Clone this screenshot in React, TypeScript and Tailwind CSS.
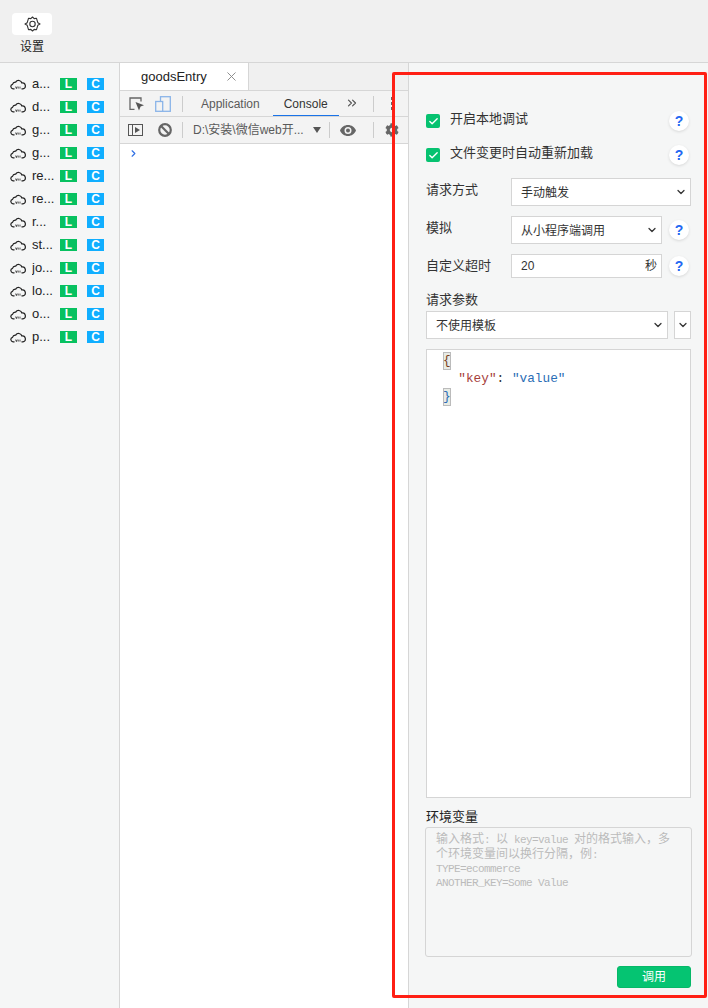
import { ChevronDown, ChevronRight, ChevronsRight, Check, X } from 'lucide-react'
import { FaCog } from 'react-icons/fa'

const FONT = "font-['Liberation_Sans','Noto_Sans_CJK_SC',sans-serif]"

const functions = ['a...', 'd...', 'g...', 'g...', 're...', 're...', 'r...', 'st...', 'jo...', 'lo...', 'o...', 'p...']

function CloudIcon() {
  return (
    <svg width="16" height="12" viewBox="0 0 16 12" fill="none" stroke="#222" strokeWidth="1.2" className="shrink-0">
      <path d="M4.5 10.8H3a2.3 2.3 0 0 1-.5-4.5 3 3 0 0 1 3.2-2.2A3.4 3.4 0 0 1 11.9 5a2.9 2.9 0 0 1 1 5.8h-1.4" />
      <path d="M5.6 8.6l.8 2 .7-2M8.2 8.6v2M10 8.6v2" strokeWidth="0.8" />
    </svg>
  )
}

function GearIcon() {
  return (
    <svg width="17" height="16" viewBox="0 0 17 16" fill="none" stroke="#333" strokeWidth="1.1" strokeLinejoin="round">
      <path d="M1 8l2.2-1.300L4.500 2.300l2.300.3L8.500 1l1.700 1.600 2.300-.3 1.300 4.400L16 8l-2.200 1.300-1.300 4.400-2.300-.3L8.500 15l-1.700-1.600-2.300.3-1.300-4.400z" />
      <circle cx="8.500" cy="8" r="2.700" />
    </svg>
  )
}

function Help() {
  return (
    <div className="flex h-5 w-5 items-center justify-center rounded-full bg-white text-[14px] font-bold text-[#2468f2] shadow-[0_1px_3px_rgba(0,0,0,0.12)]">
      ?
    </div>
  )
}

function CheckRow({ label }: { label: string }) {
  return (
    <div className="flex h-5 items-center pr-[2px]">
      <div className="flex h-[14px] w-[14px] items-center justify-center rounded-[2px] bg-[#06c270]">
        <Check size={11} strokeWidth={3} className="text-white" />
      </div>
      <span className="ml-[10px] flex-1 -translate-y-[2px] text-[13px] text-[#333]">{label}</span>
      <Help />
    </div>
  )
}

function Select({ label, className }: { label: string; className: string }) {
  return (
    <div className={`flex h-[28px] items-center border border-[#d5d5d5] bg-white text-[12px] text-[#333] ${className}`}>
      <span className="flex-1 pl-[9px] pt-[1px]">{label}</span>
      <ChevronDown size={12} strokeWidth={2.5} className="mr-[3px] text-[#333]" />
    </div>
  )
}

function Latin({ children }: { children: string }) {
  return <span className="whitespace-pre text-[11px] tracking-[-0.6px]">{children}</span>
}

export default function App() {
  return (
    <div className={`${FONT} relative flex h-[1008px] w-[708px] flex-col overflow-hidden bg-white`}>
      {/* top bar */}
      <div className="flex h-[63px] shrink-0 flex-col border-b border-[#d6d6d6] bg-[#f0f0f0] pl-[12px] pt-[13px]">
        <div className="flex h-[22px] w-[40px] items-center justify-center rounded-[4px] bg-white">
          <GearIcon />
        </div>
        <div className="mt-[3px] w-[40px] text-center text-[12px] text-[#222]">设置</div>
      </div>

      <div className="flex min-h-0 flex-1">
        {/* function list */}
        <div className="flex w-[120px] shrink-0 flex-col border-r border-[#d6d6d6] bg-[#f5f6f6] pt-[9px]">
          {functions.map((name, i) => (
            <div key={i} className="flex h-[23px] items-center pl-[10px]">
              <CloudIcon />
              <span className="ml-[6px] w-[28px] overflow-hidden whitespace-nowrap text-[13px] text-[#222]">{name}</span>
              <span className="flex h-[12px] w-[17px] items-center justify-center bg-[#07c160] text-[12px] font-bold text-white">L</span>
              <span className="ml-[10px] flex h-[12px] w-[17px] items-center justify-center bg-[#10aeff] text-[12px] font-bold text-white">C</span>
            </div>
          ))}
        </div>

        {/* devtools */}
        <div className="flex w-[288px] shrink-0 flex-col">
          <div className="flex h-[27px] shrink-0 bg-[#f0f0f0]">
            <div className="flex w-[129px] items-center border-r border-[#d6d6d6] bg-white pl-[21px] text-[13px] text-[#222]">
              <span className="flex-1">goodsEntry</span>
              <X size={15} strokeWidth={1.5} className="mr-[9px] text-[#888]" />
            </div>
          </div>
          <div className="flex h-[27px] shrink-0 items-center overflow-hidden border-b border-t border-[#d6d6d6] bg-[#f3f3f3]">
            <svg width="16" height="14" viewBox="0 0 16 14" fill="none" className="ml-[9px]">
              <path d="M5.500 12.400H1V1h11v3.500" stroke="#666" strokeWidth="1.300" />
              <path d="M6.500 5l8.500 3.200-3.400 1.400L10 13.500z" fill="#555" />
            </svg>
            <svg width="16" height="16" viewBox="0 0 16 16" fill="none" stroke="#8ab4e8" strokeWidth="1.300" className="ml-[10px]">
              <rect x="5.500" y="0.700" width="9.800" height="14.600" />
              <rect x="0.700" y="5.500" width="7" height="9.800" fill="#f3f3f3" />
            </svg>
            <div className="ml-[11px] h-[16px] w-px bg-[#ccc]" />
            <span className="ml-[18px] text-[12px] text-[#5a5a5a]">Application</span>
            <div className="relative ml-[13px] flex h-full w-[66px] items-center justify-center text-[12px] text-[#333]">
              Console
              <div className="absolute bottom-[-1px] left-0 h-[2px] w-full bg-[#1a73e8]" />
            </div>
            <ChevronsRight size={14} strokeWidth={2} className="ml-[6px] -translate-y-[1px] text-[#555]" />
            <div className="ml-[14px] h-[16px] w-px bg-[#ccc]" />
            <svg width="3" height="13" viewBox="0 0 3 13" className="ml-[17px] shrink-0">
              <rect width="3" height="3" fill="#666" />
              <rect y="5" width="3" height="3" fill="#666" />
              <rect y="10" width="3" height="3" fill="#666" />
            </svg>
          </div>
          <div className="flex h-[27px] shrink-0 items-center overflow-hidden border-b border-[#d6d6d6] bg-[#f3f3f3]">
            <svg width="15" height="12" viewBox="0 0 15 12" fill="none" className="ml-[8px]">
              <rect x="0.500" y="0.500" width="14" height="11" stroke="#555" />
              <path d="M4.500 .5v11" stroke="#555" />
              <path d="M7 3l5 3-5 3z" fill="#555" />
            </svg>
            <svg width="14" height="14" viewBox="0 0 14 14" fill="none" stroke="#666" strokeWidth="2.200" className="ml-[15px]">
              <circle cx="7" cy="7" r="5.800" />
              <path d="M2.800 2.800l8.400 8.400" />
            </svg>
            <div className="ml-[10px] h-[16px] w-px bg-[#ccc]" />
            <span className="ml-[10px] w-[111px] whitespace-nowrap text-[12px] text-[#5a5a5a]">D:\安装\微信web开...</span>
            <svg width="8" height="6" viewBox="0 0 8 6" className="ml-[9px]"><path d="M0 0h8L4 6z" fill="#555" /></svg>
            <div className="ml-[8px] h-[16px] w-px bg-[#ccc]" />
            <svg width="16" height="11" viewBox="0 0 16 11" className="ml-[10px]">
              <path fillRule="evenodd" d="M8 0c3.600 0 6.600 2.200 8 5.500C14.600 8.800 11.600 11 8 11S1.400 8.800 0 5.500C1.400 2.200 4.400 0 8 0zm0 2a3.500 3.500 0 1 0 0 7 3.500 3.500 0 0 0 0-7zm0 1.500a2 2 0 1 1 0 4 2 2 0 0 1 0-4z" fill="#666" />
            </svg>
            <div className="ml-[17px] h-[16px] w-px bg-[#ccc]" />
            <FaCog size={14} className="ml-[11px] shrink-0 text-[#666]" />
          </div>
          <div className="flex-1 bg-white pl-[8px] pt-[4px]">
            <ChevronRight size={11} strokeWidth={2.5} className="text-[#2f6fe4]" />
          </div>
        </div>

        {/* debug panel */}
        <div className="flex min-w-0 flex-1 flex-col border-l border-[#d6d6d6] bg-[#f5f6f6] px-[17px] pt-[48px]">
          <div className="flex flex-col gap-[14px]">
            <CheckRow label="开启本地调试" />
            <CheckRow label="文件变更时自动重新加载" />
          </div>
          <div className="mt-[13px] flex items-center">
            <span className="w-[85px] -translate-y-[2px] text-[13px] text-[#333]">请求方式</span>
            <Select label="手动触发" className="w-[180px]" />
          </div>
          <div className="mt-[10px] flex items-center">
            <span className="w-[85px] -translate-y-[2px] text-[13px] text-[#333]">模拟</span>
            <Select label="从小程序端调用" className="w-[151px]" />
            <div className="ml-[7px]"><Help /></div>
          </div>
          <div className="mt-[10px] flex items-center">
            <span className="w-[85px] text-[13px] text-[#333]">自定义超时</span>
            <div className="flex h-[24px] w-[151px] items-center border border-[#d5d5d5] bg-white px-[9px] text-[12px] text-[#333]">
              <span className="flex-1">20</span>
              <span className="-mr-[5px]">秒</span>
            </div>
            <div className="ml-[7px]"><Help /></div>
          </div>

          <div className="mt-[13px] text-[13px] leading-[18px] text-[#333]">请求参数</div>
          <div className="mt-[2px] flex gap-[6px]">
            <Select label="不使用模板" className="w-[242px]" />
            <div className="flex h-[28px] w-[17px] items-center justify-center border border-[#d5d5d5] bg-white">
              <ChevronDown size={12} strokeWidth={2.5} className="text-[#333]" />
            </div>
          </div>

          <div className="mt-[10px] h-[449px] border border-[#d5d5d5] bg-white pl-[16px] pt-[2px] font-['Liberation_Mono','DejaVu_Sans_Mono',monospace] text-[12.75px] leading-[18px]">
            <div><span className="inline-block w-[8px] bg-[#e8ebe5] outline outline-1 -outline-offset-1 outline-[#bbb] text-[#7a3e1d]">{'{'}</span></div>
            <div className="whitespace-pre">
              <span className="text-[#a5403a]">  "key"</span>
              <span className="text-[#333]">: </span>
              <span className="text-[#2a6db5]">"value"</span>
            </div>
            <div><span className="inline-block w-[8px] bg-[#e8ebe5] outline outline-1 -outline-offset-1 outline-[#bbb] text-[#2a6db5]">{'}'}</span></div>
          </div>

          <div className="mt-[10px] text-[13px] leading-[18px] text-[#222]">环境变量</div>
          <div className="-mx-px mt-px h-[130px] rounded-[3px] border border-[#d5d5d5] bg-[#f5f6f6] pl-[10px] pt-[5px] font-['Liberation_Mono','Noto_Sans_CJK_SC',monospace] text-[11px] leading-[14px] tracking-[-0.6px] text-[#bbb]">
            <div className="whitespace-nowrap text-[12px] leading-[15px] tracking-normal">
              输入格式<Latin>{': '}</Latin>以<Latin>{' key=value '}</Latin>对的格式输入，多
            </div>
            <div className="whitespace-nowrap text-[12px] leading-[15px] tracking-normal">
              个环境变量间以换行分隔，例<Latin>:</Latin>
            </div>
            <div className="-mt-px">TYPE=ecommerce</div>
            <div>ANOTHER_KEY=Some Value</div>
          </div>
          <div className="mt-[9px] flex justify-end">
            <button className="h-[22px] w-[74px] rounded-[3px] border border-[#06b868] bg-[#05c472] text-[12px] text-white">调用</button>
          </div>
        </div>
      </div>

      {/* red annotation frame */}
      <div className="absolute left-[392px] top-[72px] h-[926px] w-[315px] rounded-[2px] border-[3px] border-[#ff1f14]" />
    </div>
  )
}
